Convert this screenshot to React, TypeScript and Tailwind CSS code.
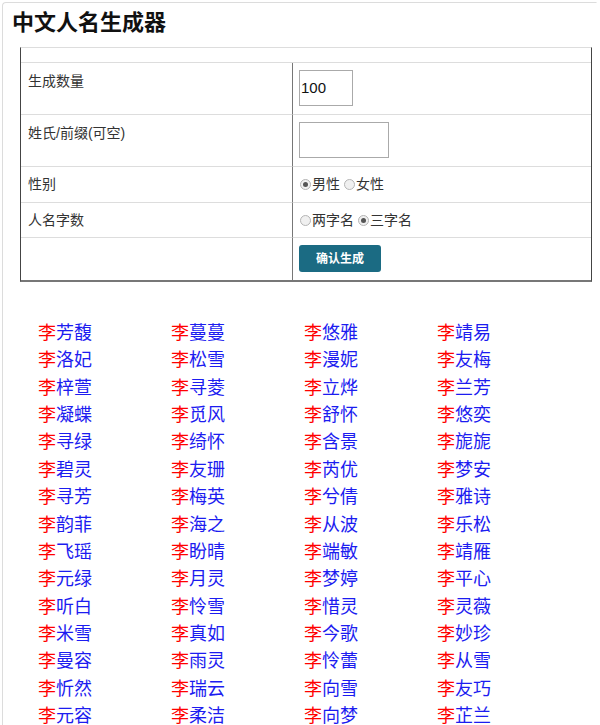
const names: string[][] = [
  ["芳馥", "蔓蔓", "悠雅", "靖易"],
  ["洛妃", "松雪", "漫妮", "友梅"],
  ["梓萱", "寻菱", "立烨", "兰芳"],
  ["凝蝶", "觅风", "舒怀", "悠奕"],
  ["寻绿", "绮怀", "含景", "旎旎"],
  ["碧灵", "友珊", "芮优", "梦安"],
  ["寻芳", "梅英", "兮倩", "雅诗"],
  ["韵菲", "海之", "从波", "乐松"],
  ["飞瑶", "盼晴", "端敏", "靖雁"],
  ["元绿", "月灵", "梦婷", "平心"],
  ["听白", "怜雪", "惜灵", "灵薇"],
  ["米雪", "真如", "今歌", "妙珍"],
  ["曼容", "雨灵", "怜蕾", "从雪"],
  ["忻然", "瑞云", "向雪", "友巧"],
  ["元容", "柔洁", "向梦", "芷兰"],
];

const Radio = ({ checked }: { checked?: boolean }) => (
  <span className="inline-flex w-[11px] h-[11px] rounded-full border border-[#b5b5b5] bg-[#f0f0f0] items-center justify-center mr-[1px]">
    {checked && <span className="w-[5px] h-[5px] rounded-full bg-[#555]" />}
  </span>
);

const App = () => {
  return (
    <div
      className="min-h-screen bg-white pt-[2px] pl-[2px] pr-[3px] overflow-hidden"
      style={{ fontFamily: '"Liberation Sans", "Noto Sans CJK SC", sans-serif' }}
    >
      <div className="border border-[#dcdcdc] border-r-transparent rounded-tl-[4px] min-h-[740px] pt-[7px]">
        <h1 className="text-[22px] leading-[26px] font-bold text-[#111] pl-[9px]">中文人名生成器</h1>

        {/* form table */}
        <div className="ml-[17px] mr-[4px] mt-[11px] border-t border-t-[#ddd] border-x border-x-[#444] border-b-2 border-b-[#777] text-[14px] text-[#333]">
          <div className="h-[15px] border-b border-[#ddd]" />
          <div className="grid grid-cols-[272px_1fr]">
            <div className="border-r border-[#777] border-b border-b-[#ddd] h-[52px] px-[7px] pt-[8px] leading-[20px]">生成数量</div>
            <div className="border-b border-[#ddd] h-[52px] px-[6px] py-[7px]">
              <div className="w-[54px] h-[36px] border border-[#aaa] flex items-center pl-[1px] text-[15px] text-[#111]">100</div>
            </div>

            <div className="border-r border-[#777] border-b border-b-[#ddd] h-[52px] px-[7px] pt-[8px] leading-[20px]">姓氏/前缀(可空)</div>
            <div className="border-b border-[#ddd] h-[52px] px-[6px] py-[7px]">
              <div className="w-[90px] h-[36px] border border-[#aaa]" />
            </div>

            <div className="border-r border-[#777] border-b border-b-[#ddd] h-[36px] px-[7px] flex items-center">性别</div>
            <div className="border-b border-[#ddd] h-[36px] px-[7px] flex items-center">
              <Radio checked />
              <span>男性</span>
              <span className="w-[4px]" />
              <Radio />
              <span>女性</span>
            </div>

            <div className="border-r border-[#777] border-b border-b-[#ddd] h-[35px] px-[7px] flex items-center">人名字数</div>
            <div className="border-b border-[#ddd] h-[35px] px-[7px] flex items-center">
              <Radio />
              <span>两字名</span>
              <span className="w-[4px]" />
              <Radio checked />
              <span>三字名</span>
            </div>

            <div className="border-r border-[#777] h-[42px]" />
            <div className="h-[42px] px-[6px] pt-[7px]">
              <button className="w-[82px] h-[27px] rounded-[3px] bg-[#1b6b83] text-white text-[12px] font-bold flex items-center justify-center">
                确认生成
              </button>
            </div>
          </div>
        </div>

        {/* names */}
        <div className="pl-[35px] pt-[38px] grid grid-cols-[133px_133px_133px_133px] text-[18px] leading-[27.36px]">
          {names.flat().map((n, i) => (
            <div key={i} className="whitespace-nowrap">
              <span className="text-[#ff0000]">李</span>
              <span className="text-[#1c1cf0]">{n}</span>
            </div>
          ))}
        </div>
      </div>
    </div>
  );
};

export default App;
